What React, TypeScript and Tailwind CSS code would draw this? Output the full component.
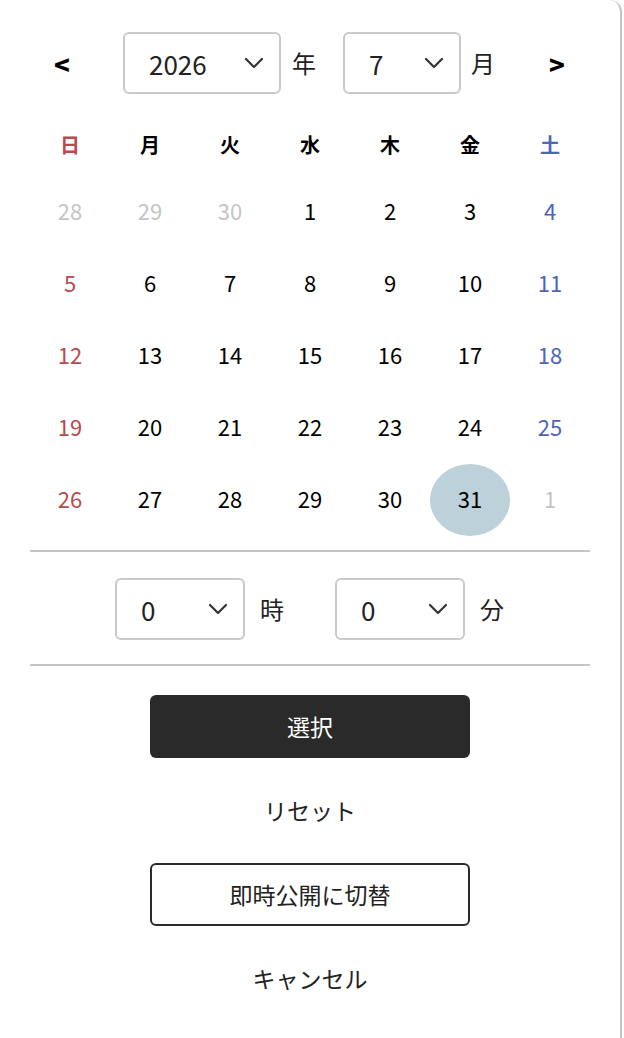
import type { ReactNode } from "react";

const WEEK = ["日", "月", "火", "水", "木", "金", "土"];

type Day = { n: number; muted?: boolean; selected?: boolean };

const DAYS: Day[] = [
  { n: 28, muted: true },
  { n: 29, muted: true },
  { n: 30, muted: true },
  ...Array.from({ length: 31 }, (_, i) => ({ n: i + 1, selected: i + 1 === 31 })),
  { n: 1, muted: true },
];

function Chevron() {
  return (
    <svg width="20" height="12" viewBox="0 0 20 12" fill="none" className="text-[#333]">
      <path d="M2 2l8 8 8-8" stroke="currentColor" strokeWidth="2.2" strokeLinecap="round" strokeLinejoin="round" />
    </svg>
  );
}

function SelectBox({ value, className }: { value: string; className: string }) {
  return (
    <div
      className={`flex h-[62px] items-center justify-between rounded-[6px] border-2 border-[#c9c9c9] pl-[24px] pr-[15px] text-[26px] text-[#222] ${className}`}
    >
      <span>{value}</span>
      <Chevron />
    </div>
  );
}

function Label({ children, className }: { children: ReactNode; className: string }) {
  return <span className={`w-[24px] text-center text-[24px] leading-none text-[#222] ${className}`}>{children}</span>;
}

export default function App() {
  return (
    <div
      className="min-h-[1060px] w-[622px] overflow-hidden rounded-[12px] border-r-2 border-[#c4c4c4] bg-white"
      style={{ fontFamily: '"Noto Sans CJK JP", "Noto Sans", sans-serif' }}
    >
      {/* header */}
      <div className="flex items-center pt-[32px]">
        <span className="ml-[50px] w-[24px] text-center text-[26px] font-black text-black">&lt;</span>
        <SelectBox value="2026" className="ml-[49px] w-[158px]" />
        <Label className="ml-[11px]">年</Label>
        <SelectBox value="7" className="ml-[27px] w-[118px]" />
        <Label className="ml-[10px]">月</Label>
        <span className="ml-[50px] w-[24px] text-center text-[26px] font-black text-black">&gt;</span>
      </div>

      {/* calendar */}
      <div className="mx-[30px] mt-[20px] w-[560px]">
        <div className="grid grid-cols-7">
          {WEEK.map((w, i) => (
            <div
              key={w}
              className={`flex h-[62px] items-center justify-center text-[20px] font-bold ${
                i === 0 ? "text-[#b94a4c]" : i === 6 ? "text-[#4a66b4]" : "text-black"
              }`}
            >
              {w}
            </div>
          ))}
        </div>
        <div className="grid grid-cols-7">
          {DAYS.map((d, i) => {
            const col = i % 7;
            const color = d.muted
              ? "text-[#c4c4c4]"
              : col === 0
                ? "text-[#b94a4c]"
                : col === 6
                  ? "text-[#4a66b4]"
                  : "text-black";
            return (
              <div key={i} className="flex h-[72px] items-center justify-center">
                <span
                  className={`flex h-[72px] w-[80px] items-center justify-center rounded-[50%] pb-[3px] text-[22px] ${color} ${
                    d.selected ? "bg-[#bcd1d9]" : ""
                  }`}
                >
                  {d.n}
                </span>
              </div>
            );
          })}
        </div>
        <div className="mt-[14px] h-[2px] bg-[#c4c4c4]" />
      </div>

      {/* time */}
      <div className="mt-[26px] flex items-center">
        <SelectBox value="0" className="ml-[115px] w-[130px]" />
        <Label className="ml-[15px]">時</Label>
        <SelectBox value="0" className="ml-[51px] w-[130px]" />
        <Label className="ml-[15px]">分</Label>
      </div>
      <div className="mx-[30px] mt-[24px] h-[2px] w-[560px] bg-[#c4c4c4]" />

      {/* actions */}
      <div className="mt-[29px] flex flex-col items-center gap-[21px]">
        <button className="h-[63px] w-[320px] rounded-[6px] bg-[#2a2a2a] text-[23px] text-white">選択</button>
        <button className="h-[63px] w-[320px] text-[23px] text-[#222]">リセット</button>
        <button className="h-[63px] w-[320px] rounded-[6px] border-2 border-[#2a2a2a] text-[23px] text-[#222]">
          即時公開に切替
        </button>
        <button className="h-[63px] w-[320px] text-[23px] text-[#222]">キャンセル</button>
      </div>
    </div>
  );
}
